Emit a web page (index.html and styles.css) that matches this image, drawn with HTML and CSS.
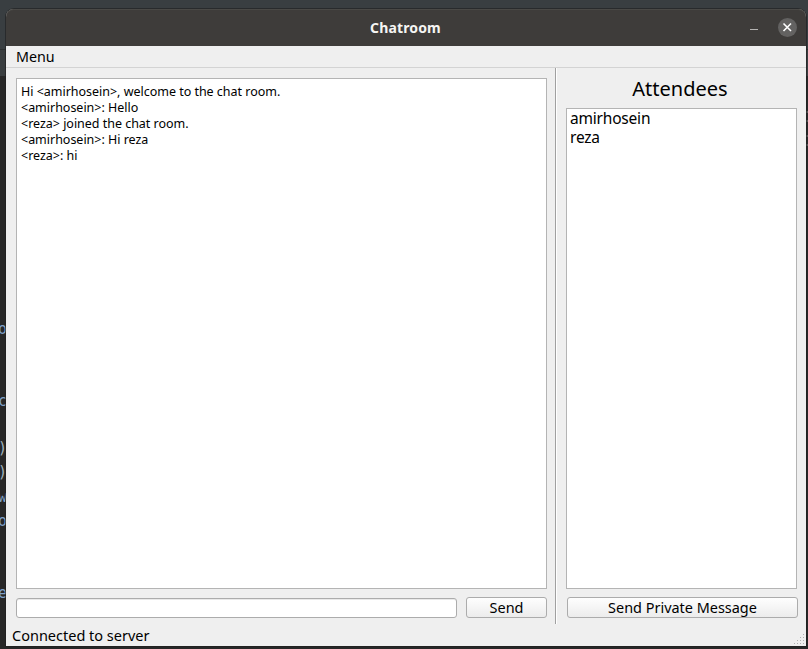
FILE: index.html
```html
<!DOCTYPE html>
<html lang="en">
<head>
<meta charset="utf-8">
<title>Chatroom</title>
<link rel="stylesheet" href="styles.css">
</head>
<body>
<div class="desktop">
  <div class="backdrop" aria-hidden="true">
    <span class="code c1">o</span>
    <span class="code c2">c</span>
    <span class="code c3">)</span>
    <span class="code c4">)</span>
    <span class="code c5">w</span>
    <span class="code c6">o</span>
    <span class="code c7">e</span>
    <i class="mark m1"></i><i class="mark m2"></i><i class="mark m3"></i><i class="mark m4"></i>
  </div>
  <main class="window">
    <header class="titlebar">
      <h1 class="title">Chatroom</h1>
      <div class="controls">
        <span class="minimize"></span>
        <span class="close"><svg width="19" height="19" viewBox="0 0 19 19"><path d="M5.5 5.5l7.5 7.5M13 5.5l-7.5 7.5" stroke="#fff" stroke-width="1.6" fill="none"/></svg></span>
      </div>
    </header>
    <nav class="menubar"><span class="menu">Menu</span></nav>
    <div class="content">
      <section class="chat">
        <div class="log">
          <p>Hi &lt;amirhosein&gt;, welcome to the chat room.</p>
          <p>&lt;amirhosein&gt;: Hello</p>
          <p>&lt;reza&gt; joined the chat room.</p>
          <p>&lt;amirhosein&gt;: Hi reza</p>
          <p>&lt;reza&gt;: hi</p>
        </div>
        <div class="compose">
          <input class="entry" type="text" aria-label="Message">
          <button class="button send">Send</button>
        </div>
      </section>
      <div class="divider"></div>
      <section class="people">
        <h2 class="heading">Attendees</h2>
        <ul class="list"><li>amirhosein</li><li>reza</li></ul>
        <button class="button private">Send Private Message</button>
      </section>
    </div>
    <footer class="status">
      <span>Connected to server</span>
      <svg class="grip" width="11" height="11" viewBox="0 0 11 11" fill="#b0b0b0"><path d="M9 0h1v1h-1zM6 3h1v1h-1zM9 3h1v1h-1zM3 6h1v1h-1zM6 6h1v1h-1zM9 6h1v1h-1zM0 9h1v1h-1zM3 9h1v1h-1zM6 9h1v1h-1zM9 9h1v1h-1z"/></svg>
    </footer>
  </main>
</div>
</body>
</html>
```
FILE: styles.css
```css
* { box-sizing: border-box; }
body { margin: 0; font-family: "Noto Sans", sans-serif; color: #000; }
h1, h2, p, ul { margin: 0; padding: 0; font-weight: normal; }
.desktop {
  position: relative;
  width: 808px;
  height: 649px;
  padding: 9px 2px 3px 6px;
  overflow: hidden;
  background: linear-gradient(#393e41 0 49px, #2c2f30 49px 50px, #3a3e40 50px 76px, #272727 76px);
}
.backdrop { position: absolute; inset: 0; }
.code { position: absolute; left: -2px; font: 15px/20px "DejaVu Sans Mono", monospace; color: #7fa0c6; }
.c1 { top: 319px; }
.c2 { top: 391px; }
.c3 { top: 438px; color: #9fb0bc; }
.c4 { top: 462px; color: #9fb0bc; }
.c5 { top: 487px; }
.c6 { top: 511px; }
.c7 { top: 583px; }
.mark { position: absolute; left: 806px; width: 2px; height: 2px; background: #555; }
.m1 { top: 111px; }
.m2 { top: 120px; }
.m3 { top: 135px; }
.m4 { top: 144px; }
.window {
  position: relative;
  display: flex;
  flex-direction: column;
  height: 637px;
  border-radius: 8px 8px 0 0;
  background: #efefef;
  box-shadow: 0 0 0 1px rgba(30, 30, 30, .6);
}
.titlebar {
  display: grid;
  grid-template-columns: 1fr auto 1fr;
  align-items: center;
  height: 37px;
  flex: none;
  border-radius: 8px 8px 0 0;
  background: #3e3c3a;
  box-shadow: inset 0 1px #4a4946;
}
.title { grid-column: 2; margin-left: -1px; font-size: 14px; font-weight: 700; line-height: 20px; color: #f5f5f3; letter-spacing: .15px; }
.controls { display: flex; justify-content: flex-end; align-items: center; gap: 20px; padding-right: 9px; }
.minimize { width: 8px; height: 1px; margin-top: 4px; background: #b5b4b2; }
.close { width: 19px; height: 19px; margin-top: -1px; border-radius: 50%; background: #636261; }
.close svg { display: block; }
.menubar { height: 22px; flex: none; padding-left: 10px; border-bottom: 1px solid #d3d3d3; font-size: 14.3px; line-height: 21px; }
.content { display: flex; height: 556px; flex: none; }
.chat { display: flex; flex-direction: column; width: 549px; padding: 10px 8px 0 10px; }
.log { height: 511px; padding: 5px 4px; border: 1px solid #b4b4b4; background: #fff; font-size: 12.5px; line-height: 16px; letter-spacing: -.02px; }
.compose { display: flex; align-items: flex-end; gap: 9px; height: 29px; }
.entry { width: 441px; height: 20px; border: 1px solid #acacac; border-radius: 3px; background: #fff; box-shadow: inset 0 1px #e9e9e9; }
.button { height: 21px; padding: 0; border: 1px solid #acacac; border-radius: 3px; background: linear-gradient(#fefefe, #ececec); font: 14.45px/19px "Noto Sans", sans-serif; color: #000; }
.send { width: 81px; }
.divider { width: 2px; border-left: 1px solid #a0a0a0; border-right: 1px solid #fff; }
.people { display: flex; flex-direction: column; width: 249px; padding: 10px 8px 0 9px; }
.heading { height: 30px; margin-right: 4px; font-size: 20px; line-height: 22px; text-align: center; }
.list { width: 231px; height: 481px; padding: 0 3px; border: 1px solid #b4b4b4; background: #fff; list-style: none; font-size: 15.5px; line-height: 19px; letter-spacing: -.2px; }
.private { width: 231px; margin: 8px 0 0 1px; }
.status { display: flex; flex: 1; align-items: flex-end; justify-content: space-between; padding: 0 1px 0 6px; font-size: 14.5px; line-height: 21px; }
.grip { display: block; margin-bottom: 1px; }
```
